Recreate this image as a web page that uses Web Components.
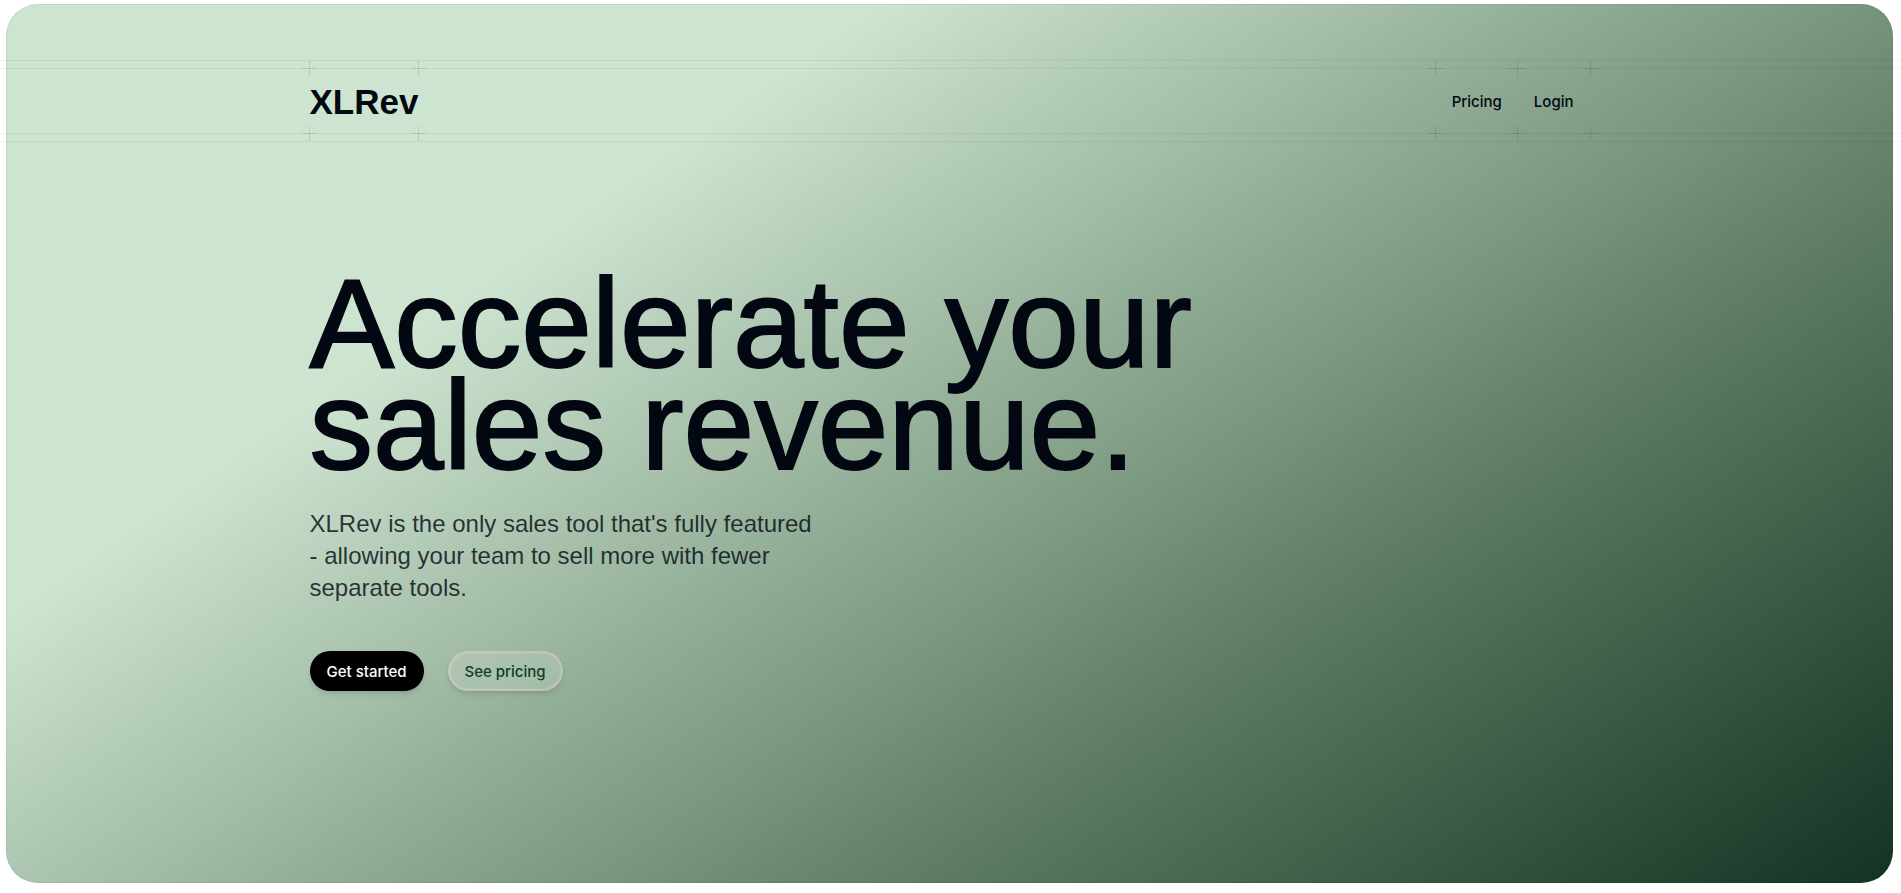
<!DOCTYPE html>
<html lang="en">
<head>
  <meta charset="utf-8">
  <meta name="viewport" content="width=device-width, initial-scale=1">
  <title>XLRev</title>
  <style>
    body {
      margin: 0;
      background: #fff;
      color: #030712;
      font-family: "Liberation Sans", Arial, sans-serif;
    }
  </style>
</head>
<body>
  <landing-hero>
    <plus-grid-row slot="header">
      <plus-grid-item slot="start" last><brand-logo>XLRev</brand-logo></plus-grid-item>
      <plus-grid-item><nav-link href="#pricing">Pricing</nav-link></plus-grid-item>
      <plus-grid-item last><nav-link href="#login">Login</nav-link></plus-grid-item>
    </plus-grid-row>
    <span slot="title">Accelerate your sales revenue.</span>
    <span slot="lead">XLRev is the only sales tool that's fully featured - allowing your team to sell more with fewer separate tools.</span>
    <pill-button slot="actions">Get started</pill-button>
    <pill-button slot="actions" variant="outline">See pricing</pill-button>
  </landing-hero>

  <script>
    function createTemplate(html) {
      const template = document.createElement('template');
      template.innerHTML = html;
      return template;
    }

    class BaseElement extends HTMLElement {
      constructor() {
        super();
        this.attachShadow({mode: 'open'});
        this.shadowRoot.appendChild(this.constructor.template.content.cloneNode(true));
      }
    }

    class LandingHero extends BaseElement {
      static template = createTemplate(`
        <style>
          :host {
            display: block;
            position: relative;
            overflow: hidden;
            padding: 0 8px 0 6px;
          }
          .background {
            position: absolute;
            inset: 4px 8px 10px 6px;
            border-radius: 32px;
            background: linear-gradient(145deg, #cde4d0 28%, #5b7a61 70%, #123323);
            box-shadow: inset 0 0 0 1px rgb(0 0 0 / 5%);
          }
          .container {
            position: relative;
            box-sizing: border-box;
            max-width: 1280px;
            margin: 0 auto;
            padding-top: 60px;
          }
          main {
            padding: 130px 0 202px;
          }
          h1 {
            max-width: 960px;
            margin: 0;
            font-size: 127px;
            font-weight: 400;
            line-height: 102px;
            -webkit-text-stroke: 2px currentColor;
          }
          p {
            max-width: 512px;
            margin: 32px 0 0;
            color: rgb(3 7 18 / 80%);
            font-size: 24px;
            line-height: 32px;
          }
          .actions {
            display: flex;
            gap: 24px;
            margin-top: 47px;
          }
          @media (max-width: 1328px) {
            .container {
              padding-left: 24px;
              padding-right: 24px;
            }
          }
        </style>
        <div class="background"></div>
        <div class="container">
          <slot name="header"></slot>
          <main>
            <h1><slot name="title"></slot></h1>
            <p><slot name="lead"></slot></p>
            <div class="actions"><slot name="actions"></slot></div>
          </main>
        </div>
      `);
    }

    // Row with a pair of hairlines above and below that run across the window
    class PlusGridRow extends BaseElement {
      static template = createTemplate(`
        <style>
          :host {
            display: block;
            position: relative;
          }
          .lines {
            position: absolute;
            inset: 0 -100vw;
            border: solid rgb(0 0 0 / 5%);
            border-width: 1px 0;
            pointer-events: none;
          }
          .lines::before {
            content: '';
            position: absolute;
            inset: 7px 0;
            border: inherit;
          }
          header {
            display: flex;
            justify-content: space-between;
            padding: 8px 0;
          }
          nav {
            display: flex;
          }
        </style>
        <div class="lines"></div>
        <header>
          <slot name="start"></slot>
          <nav aria-label="Main"><slot></slot></nav>
        </header>
      `);
    }

    // Cell with crosshairs on its left corners, and on its right ones when last
    class PlusGridItem extends BaseElement {
      static template = createTemplate(`
        <style>
          :host {
            display: flex;
            position: relative;
            height: 66px;
          }
          svg {
            position: absolute;
            width: 15px;
            height: 15px;
            fill: rgb(0 0 0 / 10%);
          }
          .top { top: -7px; }
          .bottom { bottom: -7px; }
          .left { left: -8px; }
          .right { right: -8px; }
          :host(:not([last])) .right {
            display: none;
          }
        </style>
        <svg class="top left" viewBox="0 0 15 15" aria-hidden="true"><path d="M7 0h1v7h7v1H8v7H7V8H0V7h7z"/></svg>
        <svg class="top right" viewBox="0 0 15 15" aria-hidden="true"><path d="M7 0h1v7h7v1H8v7H7V8H0V7h7z"/></svg>
        <svg class="bottom left" viewBox="0 0 15 15" aria-hidden="true"><path d="M7 0h1v7h7v1H8v7H7V8H0V7h7z"/></svg>
        <svg class="bottom right" viewBox="0 0 15 15" aria-hidden="true"><path d="M7 0h1v7h7v1H8v7H7V8H0V7h7z"/></svg>
        <slot></slot>
      `);
    }

    class BrandLogo extends BaseElement {
      static template = createTemplate(`
        <style>
          :host {
            display: flex;
            align-items: center;
            padding-top: 2px;
          }
          a {
            color: inherit;
            font-size: 35px;
            font-weight: 700;
            line-height: 40px;
            text-decoration: none;
          }
        </style>
        <a href="#"><slot></slot></a>
      `);
    }

    class NavLink extends BaseElement {
      static template = createTemplate(`
        <style>
          :host {
            display: flex;
            padding-top: 2px;
          }
          a {
            display: flex;
            align-items: center;
            padding: 0 16px;
            color: inherit;
            font: 500 15px/24px Inter, "Liberation Sans", sans-serif;
            text-decoration: none;
          }
        </style>
        <a><slot></slot></a>
      `);

      connectedCallback() {
        this.shadowRoot.querySelector('a').setAttribute('href', this.getAttribute('href') || '#');
      }
    }

    class PillButton extends BaseElement {
      static template = createTemplate(`
        <style>
          :host {
            display: block;
          }
          button {
            height: 40px;
            padding: 1px 17px 0;
            border: 0;
            border-radius: 20px;
            background: #000;
            box-shadow: 0 4px 6px -1px rgb(0 0 0 / 10%), 0 2px 4px -2px rgb(0 0 0 / 10%);
            color: #fff;
            cursor: pointer;
            font: 500 15px/24px Inter, "Liberation Sans", sans-serif;
            white-space: nowrap;
          }
          :host([variant="outline"]) button {
            background: rgb(255 255 255 / 15%);
            box-shadow:
              inset 0 0 0 1px rgb(209 80 82 / 15%),
              inset 0 0 2px 2px rgb(255 255 255 / 30%),
              0 4px 6px -1px rgb(0 0 0 / 10%),
              0 2px 4px -2px rgb(0 0 0 / 10%);
            color: #0f3d29;
          }
        </style>
        <button type="button"><slot></slot></button>
      `);
    }

    customElements.define('landing-hero', LandingHero);
    customElements.define('plus-grid-row', PlusGridRow);
    customElements.define('plus-grid-item', PlusGridItem);
    customElements.define('brand-logo', BrandLogo);
    customElements.define('nav-link', NavLink);
    customElements.define('pill-button', PillButton);
  </script>
</body>
</html>
